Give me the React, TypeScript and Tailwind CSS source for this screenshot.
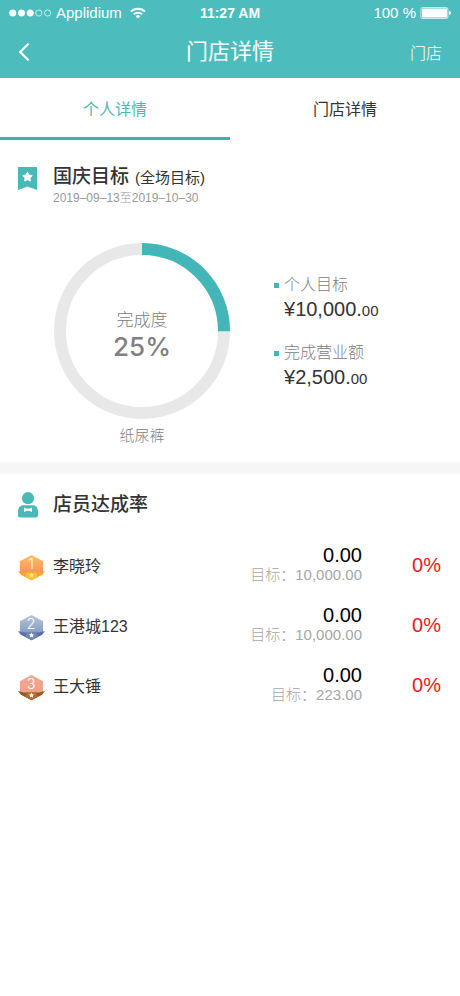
import { useState } from "react";

interface Clerk {
    name: string;
    sales: string;
    target: string;
    rate: string;
}

const CLERKS: Clerk[] = [
    { name: "李晓玲", sales: "0.00", target: "10,000.00", rate: "0%" },
    { name: "王港城123", sales: "0.00", target: "10,000.00", rate: "0%" },
    { name: "王大锤", sales: "0.00", target: "223.00", rate: "0%" },
];

// Gold, silver, bronze
const MEDALS = [
    { top: "#fcc063", bottom: "#f98d5c", ribbon: "#fba52c", tip: "#fbc02f", star: "#ffe9a0" },
    { top: "#b9c6d3", bottom: "#7f97c4", ribbon: "#5a6ea3", tip: "#6f86b8", star: "#ffffff" },
    { top: "#eda793", bottom: "#f59f86", ribbon: "#8f5a2a", tip: "#b06d30", star: "#ffffff" },
];

const TABS = ["个人详情", "门店详情"];

function StatusBar() {
    return (
        <div className="grid h-[25px] grid-cols-3 items-center px-[9px]">
            <div className="flex items-center gap-1 text-[15px] leading-5">
                <svg width="43" height="10" viewBox="0 0 43 10" fill="none" stroke="#fff">
                    {[0, 1, 2].map((i) => (
                        <circle key={i} cx={3.7 + i * 8.8} cy="5" r="3.3" fill="#fff" strokeWidth="0.5" />
                    ))}
                    {[3, 4].map((i) => (
                        <circle key={i} cx={3.4 + i * 8.8} cy="5" r="3.1" strokeWidth="0.7" />
                    ))}
                </svg>
                <span>Applidium</span>
                <svg className="ml-1 shrink-0" width="16" height="12" viewBox="0 0 16 12" fill="none" stroke="#fff" strokeWidth="2">
                    <path d="M1 4.6a10 10 0 0 1 14 0" />
                    <path d="M3.8 7.4a6 6 0 0 1 8.4 0" />
                    <path d="M8 11.6 5.7 9.3a3.2 3.2 0 0 1 4.6 0z" fill="#fff" stroke="none" />
                </svg>
            </div>
            <div className="text-center text-sm font-bold">11:27 AM</div>
            <div className="flex items-center justify-end gap-1 text-[15px] leading-5">
                <span>100 %</span>
                <svg width="31" height="12" viewBox="0 0 31 12" fill="none">
                    <rect x="0.9" y="0.5" width="27" height="11" rx="1.5" stroke="#fff" strokeOpacity="0.7" />
                    <rect x="2" y="1.5" width="25" height="9" rx="0.5" fill="#fff" />
                    <path d="M29 4c1.4.3 2 1.1 2 2s-.6 1.7-2 2z" fill="#fff" />
                </svg>
            </div>
        </div>
    );
}

function BookmarkIcon() {
    return (
        <svg width="19" height="23" viewBox="0 0 19 23">
            <path d="M0 0h19v23l-9.5-3.6L0 23z" fill="#49b9b8" />
            <path
                d="M9.5 5.2l1.5 2.9 3.2.5-2.3 2.3.5 3.2-2.9-1.5-2.9 1.5.5-3.2-2.3-2.3 3.2-.5z"
                fill="#fff"
                stroke="#fff"
                strokeLinejoin="round"
                strokeWidth="1"
            />
        </svg>
    );
}

function ClerkIcon() {
    return (
        <svg width="20" height="26" viewBox="0 0 20 26" fill="#49b9b8">
            <circle cx="10" cy="6.2" r="6.1" />
            <path d="M5.5 13.2h9c3.2 0 5.5 2.6 5.5 6v4.3c0 1.1-.9 2-2 2H2c-1.1 0-2-.9-2-2v-4.3c0-3.4 2.3-6 5.5-6z" />
            <path d="M6 15.5l3 1.2h2l3-1.2v4.6l-3-1.3H9l-3 1.3z" fill="#fff" />
        </svg>
    );
}

function Medal({ rank }: { rank: number }) {
    const m = MEDALS[rank - 1];
    const id = `medal-${rank}`;
    return (
        <svg width="27" height="27" viewBox="0 0 28 27" className="shrink-0">
            <defs>
                <linearGradient id={id} x1="0" y1="0" x2="0" y2="1">
                    <stop offset="0" stopColor={m.top} />
                    <stop offset="0.8" stopColor={m.bottom} />
                </linearGradient>
            </defs>
            <path d="M14 .5 26 7v13l-12 6.5L2 20V7z" fill={`url(#${id})`} />
            <path d="M0 17.2l6 1.4h16l6-1.4-3 3.8-11 5.8L3 21z" fill={m.ribbon} />
            <path d="M9 18.6h10l1.5 4.7-6.5 3.5-6.5-3.5z" fill={m.tip} />
            <path d="M14 18.8l.9 1.6 1.8.3-1.3 1.3.3 1.8-1.7-.8-1.7.8.3-1.8-1.3-1.3 1.8-.3z" fill={m.star} />
            <text x="13.5" y="15" textAnchor="middle" fill="#fff" className="font-[Inter,sans-serif] text-[15px] font-light">
                {rank}
            </text>
        </svg>
    );
}

function Ring({ percent }: { percent: number }) {
    const r = 82;
    const length = 2 * Math.PI * r;
    return (
        <div className="grid size-44 place-items-center">
            <svg className="col-start-1 row-start-1" width="176" height="176" viewBox="0 0 176 176" fill="none" strokeWidth="12">
                <circle cx="88" cy="88" r={r} stroke="#e8e8e8" />
                <circle
                    cx="88"
                    cy="88"
                    r={r}
                    stroke="#43b6b8"
                    strokeDasharray={`${(length * percent) / 100} ${length}`}
                    transform="rotate(-90 88 88)"
                />
            </svg>
            <div className="col-start-1 row-start-1 pt-2 text-center text-[#808080]">
                <div className="text-[17px] leading-6 font-light">完成度</div>
                <div className="font-[Inter,sans-serif] text-[26px] leading-7 font-medium">{percent}%</div>
            </div>
        </div>
    );
}

function Amount({ label, whole, cents }: { label: string; whole: string; cents: string }) {
    return (
        <div>
            <dt className="flex items-center gap-[5px] text-base leading-6 font-light text-[#808080]">
                <span className="size-[5px] bg-[#43b6b8]" />
                {label}
            </dt>
            <dd className="pl-[10px] text-xl leading-6 text-[#333]">
                ¥{whole}.<span className="text-[15px]">{cents}</span>
            </dd>
        </div>
    );
}

export default function App() {
    const [tab, setTab] = useState(0);

    return (
        <div className="min-h-screen bg-white font-['Liberation_Sans','Noto_Sans_CJK_SC',sans-serif] text-[#333]">
            <header className="bg-[#4cbcbc] text-white">
                <StatusBar />
                <div className="grid h-[53px] grid-cols-3 items-center px-[18px]">
                    <button type="button" aria-label="返回" className="flex h-10 w-10 items-center">
                        <svg width="13" height="18" viewBox="0 0 13 18" fill="none" stroke="#fff" strokeWidth="2.2" strokeLinecap="round" strokeLinejoin="round">
                            <path d="M10 1.3 2.2 9l7.8 7.7" />
                        </svg>
                    </button>
                    <h1 className="text-center text-[22px] leading-8">门店详情</h1>
                    <button type="button" className="justify-self-end pt-1 text-base font-light">门店</button>
                </div>
            </header>

            <div role="tablist" className="grid grid-cols-2">
                {TABS.map((name, i) => (
                    <button
                        key={name}
                        type="button"
                        role="tab"
                        aria-selected={tab === i}
                        onClick={() => setTab(i)}
                        className={`h-[62px] border-b-3 pt-1 text-base ${
                            tab === i ? "border-[#43b0b0] text-[#49b9b8]" : "border-transparent text-[#333]"
                        }`}
                    >
                        {name}
                    </button>
                ))}
            </div>

            <main>
                {/* Store-wide target */}
                <section className="border-b-12 border-[#f6f6f6] px-[18px] pt-[25px] pb-[14px]">
                    <div className="flex gap-4">
                        <div className="pt-[2px]">
                            <BookmarkIcon />
                        </div>
                        <div>
                            <h2 className="flex items-baseline gap-[6px] text-[19px] leading-6 font-medium">
                                国庆目标
                                <span className="text-[15px] font-normal">(全场目标)</span>
                            </h2>
                            <p className="text-xs leading-4 font-light text-[#999]">2019–09–13至2019–10–30</p>
                        </div>
                    </div>

                    <div className="mt-[37px] grid grid-cols-[1fr_auto] gap-2">
                        <figure className="flex flex-col items-center justify-self-center">
                            <Ring percent={25} />
                            <figcaption className="pt-[5px] text-[15px] leading-6 font-light text-[#808080]">纸尿裤</figcaption>
                        </figure>
                        <dl className="flex w-[168px] flex-col gap-[18px] pt-[30px]">
                            <Amount label="个人目标" whole="10,000" cents="00" />
                            <Amount label="完成营业额" whole="2,500" cents="00" />
                        </dl>
                    </div>
                </section>

                {/* Clerk ranking */}
                <section className="pt-[17px]">
                    <div className="flex items-center gap-[15px] px-[18px]">
                        <ClerkIcon />
                        <h2 className="text-[19px] leading-7 font-medium">店员达成率</h2>
                    </div>
                    <table className="mt-4 w-full">
                        <tbody>
                            {CLERKS.map((c, i) => (
                                <tr key={c.name} className="h-15">
                                    <td className="pt-1 pl-[18px]">
                                        <div className="flex items-center gap-2 text-base">
                                            <Medal rank={i + 1} />
                                            {c.name}
                                        </div>
                                    </td>
                                    <td className="text-right">
                                        <div className="text-xl leading-5 text-black">{c.sales}</div>
                                        <div className="text-[15px] leading-5 font-light text-[#a6a6a6]">目标：{c.target}</div>
                                    </td>
                                    <td className="w-[98px] pr-[19px] text-right text-xl text-[#e8191c]">{c.rate}</td>
                                </tr>
                            ))}
                        </tbody>
                    </table>
                </section>
            </main>
        </div>
    );
}
